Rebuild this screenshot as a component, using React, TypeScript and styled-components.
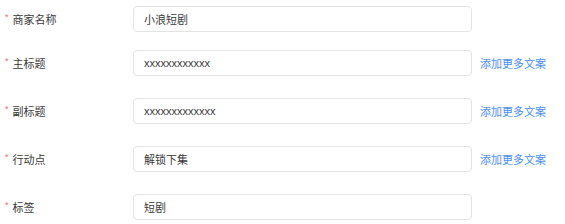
import styled, { createGlobalStyle } from 'styled-components';

const GlobalStyle = createGlobalStyle`
  body {
    margin: 0;
    background: #fff;
    font-family: "Liberation Sans", "Noto Sans CJK SC", sans-serif;
  }
`;

interface FieldItem {
  label: string;
  value: string;
  hasMore?: boolean;
}

const fields: FieldItem[] = [
  { label: '商家名称', value: '小浪短剧' },
  { label: '主标题', value: 'xxxxxxxxxxxx', hasMore: true },
  { label: '副标题', value: 'xxxxxxxxxxxxx', hasMore: true },
  { label: '行动点', value: '解锁下集', hasMore: true },
  { label: '标签', value: '短剧' },
];

const App = () => {
  return (
    <>
      <GlobalStyle />
      <StyledForm>
        {fields.map((field) => (
          <StyledRow key={field.label}>
            <StyledLabel>
              <Required>*</Required>
              {field.label}
            </StyledLabel>
            <StyledInput defaultValue={field.value} />
            {field.hasMore && <MoreLink>添加更多文案</MoreLink>}
          </StyledRow>
        ))}
      </StyledForm>
    </>
  );
};

const StyledForm = styled.div`
  padding: 6px 0 0 5px;
`;

const StyledRow = styled.div`
  display: flex;
  align-items: center;
  height: 26px;
  margin-bottom: 22px;
  &:first-child {
    margin-bottom: 18px;
  }
  &:last-child {
    margin-bottom: 0;
  }
`;

const StyledLabel = styled.label`
  display: flex;
  align-items: center;
  width: 128px;
  font-size: 11px;
  color: #3a3a3a;
`;

const Required = styled.span`
  color: #f56c6c;
  font-size: 9px;
  margin-right: 4px;
  position: relative;
  top: -2px;
`;

const StyledInput = styled.input`
  box-sizing: border-box;
  width: 339px;
  height: 26px;
  padding: 0 10px;
  border: 1px solid #e3e3e3;
  border-radius: 4px;
  font-family: "Liberation Sans", "Noto Sans CJK SC", sans-serif;
  font-size: 11px;
  color: #3a3a3a;
  outline: none;
`;

const MoreLink = styled.span`
  margin-left: 8px;
  font-size: 11px;
  color: #4a8ef5;
  cursor: pointer;
`;

export default App;
